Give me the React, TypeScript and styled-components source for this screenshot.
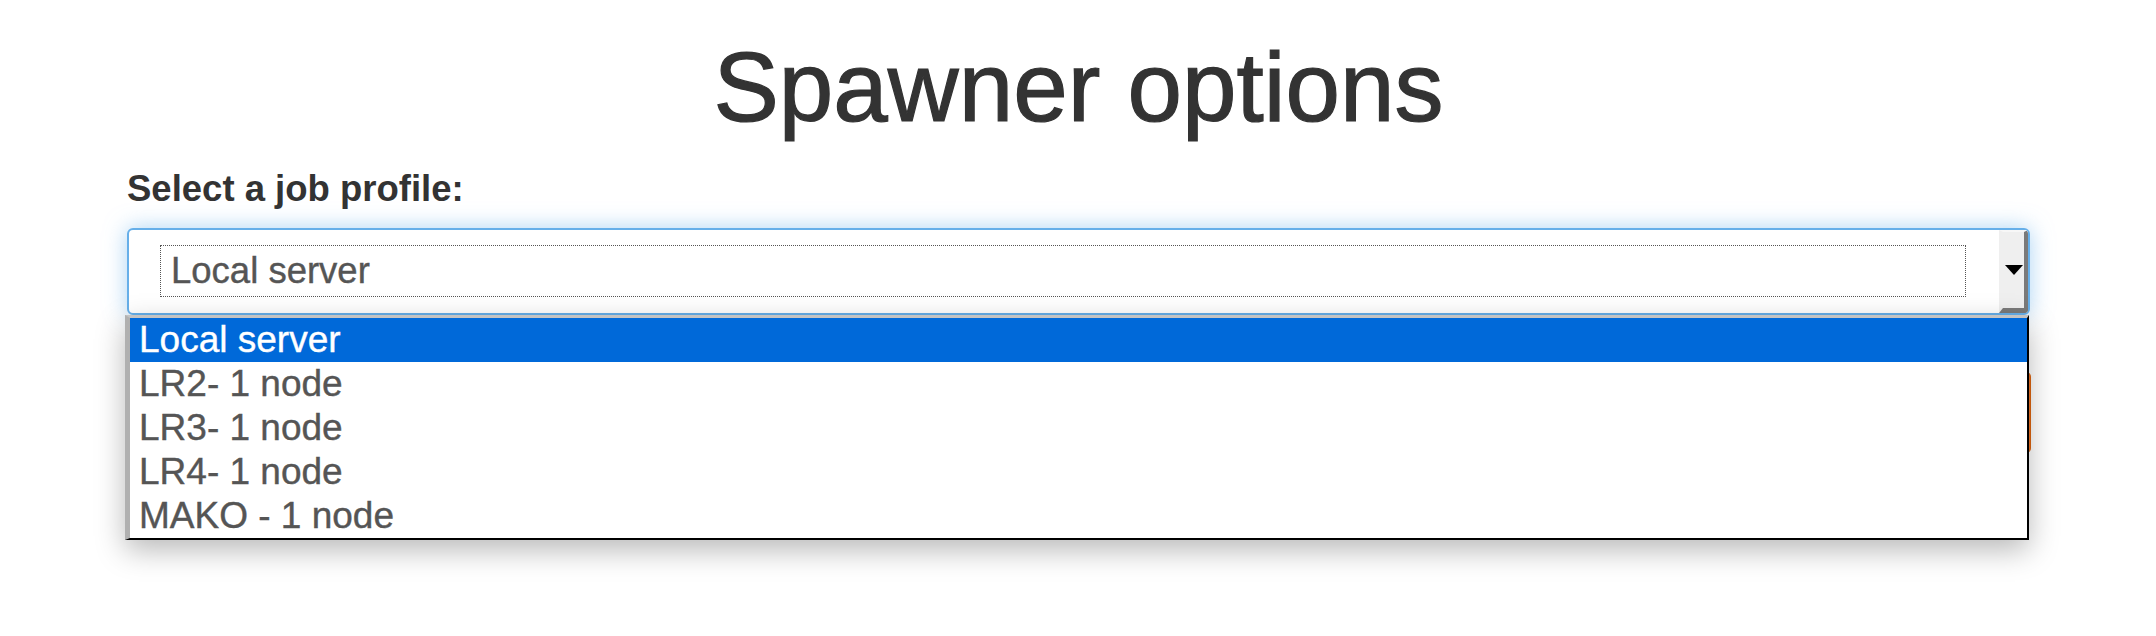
import styled, { createGlobalStyle } from "styled-components";

const GlobalStyle = createGlobalStyle`
    body {
        margin: 0;
        background: #fff;
        font-family: "Liberation Sans", Helvetica, Arial, sans-serif;
        color: #333;
    }
`;

const Page = styled.div`
    box-sizing: border-box;
    min-height: 636px;
    padding: 35px 126px 0 127px;
`;

const Title = styled.h1`
    margin: 0;
    text-align: center;
    font-size: 98px;
    font-weight: 500;
    line-height: 1.08;
    color: #333;
    -webkit-text-stroke: 1.2px #333;
`;

const Label = styled.label`
    display: block;
    margin: 22px 0 13px;
    font-size: 36.5px;
    font-weight: bold;
    line-height: 52px;
    color: #333;
`;

const Field = styled.div`
    position: relative;
`;

const Select = styled.div`
    display: flex;
    height: 87px;
    box-sizing: border-box;
    border: 2px solid #66afe9;
    border-radius: 6px;
    background: #fff;
    box-shadow: 0 0 22px rgba(102, 175, 233, 0.55);
    overflow: hidden;
`;

const Value = styled.div`
    flex: 1;
    padding: 15px 33px 16px 31px;
`;

const Focus = styled.div`
    height: 52px;
    box-sizing: border-box;
    border: 1px dotted #555;
    padding: 0 10px;
    font-size: 36.5px;
    line-height: 50px;
    color: #555;
    -webkit-text-stroke: 0.4px #555;
`;

const ArrowButton = styled.div`
    display: flex;
    align-items: center;
    justify-content: center;
    width: 29px;
    box-sizing: border-box;
    border-style: solid;
    border-width: 2px 4px 5px 4px;
    border-color: #f7f7f7 #7a7a7a #7a7a7a #efefef;
    background: #efefef;
`;

const List = styled.ul`
    position: absolute;
    top: 87px;
    left: -2px;
    right: 1px;
    z-index: 2;
    margin: 0;
    padding: 0;
    list-style: none;
    background: #fff;
    border-style: solid;
    border-width: 3px 2px 2px 5px;
    border-color: #c3c3c3 #000 #000 #b0b0b0;
    box-shadow: 0 10px 28px rgba(0, 0, 0, 0.28);
`;

const Option = styled.li<{ $active?: boolean }>`
    height: 44px;
    padding-left: 9px;
    font-size: 37px;
    line-height: 44px;
    color: ${(p) => (p.$active ? "#fff" : "#555")};
    background: ${(p) => (p.$active ? "#0069d9" : "transparent")};
    -webkit-text-stroke: 0.4px ${(p) => (p.$active ? "#fff" : "#555")};
`;

const Spawn = styled.button`
    display: block;
    width: calc(100% + 1px);
    height: 83px;
    margin-top: 56px;
    border: 1px solid #de6410;
    border-radius: 6px;
    background: #f37524;
    color: #fff;
    font-family: inherit;
    font-size: 36.5px;
`;

const profiles = ["Local server", "LR2- 1 node", "LR3- 1 node", "LR4- 1 node", "MAKO - 1 node"];

export default function App() {
    return (
        <>
            <GlobalStyle />
            <Page>
                <Title>Spawner options</Title>
                <Label>Select a job profile:</Label>
                <Field>
                    <Select>
                        <Value>
                            <Focus>Local server</Focus>
                        </Value>
                        <ArrowButton>
                            <svg width="18" height="10" viewBox="0 0 18 10">
                                <polygon points="0,0 18,0 9,10" fill="#000" />
                            </svg>
                        </ArrowButton>
                    </Select>
                    <List>
                        {profiles.map((name, i) => (
                            <Option key={name} $active={i === 0}>
                                {name}
                            </Option>
                        ))}
                    </List>
                    <Spawn>Spawn</Spawn>
                </Field>
            </Page>
        </>
    );
}
